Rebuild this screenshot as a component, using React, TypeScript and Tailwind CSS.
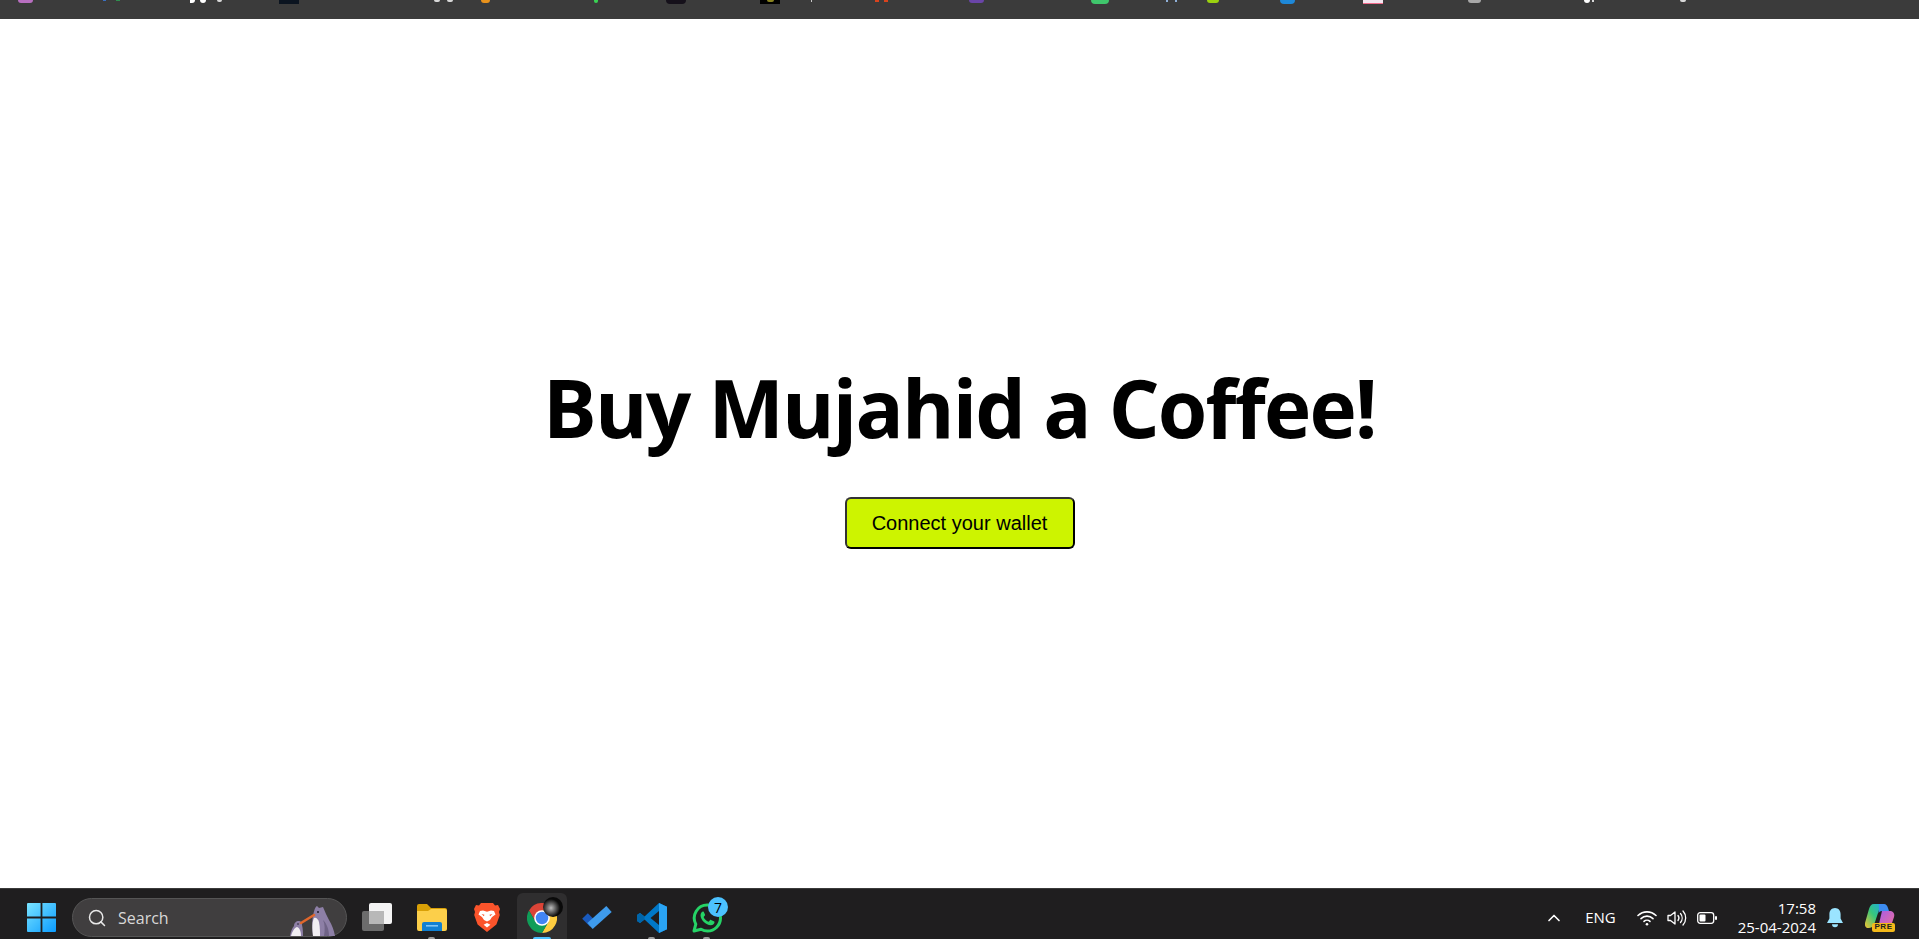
import { ChevronUp, Search } from 'lucide-react';

function TopBar() {
  // what is left of the bookmark icons, cut off by the top of the window
  return (
    <div className="flex h-[19px] shrink-0 items-start bg-[#3b3b3b]">
      <span className="ml-[18px] h-[3px] w-[15px] rounded-b-full bg-[#b86fc0]" />
      <span className="ml-[70px] h-px w-[3px] bg-[#3a6fc0]" />
      <span className="ml-[10px] h-px w-[4px] bg-[#2f8f4f]" />
      <span className="ml-[70px] h-[3px] w-[5px] rounded-br bg-white" />
      <span className="ml-[5px] h-[3px] w-[6px] rounded-b bg-white" />
      <span className="ml-[11px] h-[2px] w-[5px] rounded-b bg-[#d8d8d8]" />
      <span className="ml-[57px] h-[4px] w-[20px] bg-[#0b1420]" />
      <span className="ml-[135px] h-[2px] w-[6px] rounded-b bg-[#d8d8d8]" />
      <span className="ml-[7px] h-[2px] w-[6px] rounded-b bg-[#d8d8d8]" />
      <span className="ml-[28px] h-[3px] w-[9px] rounded-b-full bg-[#e8921c]" />
      <span className="ml-[104px] h-[3px] w-[4px] rounded-b-full bg-[#39d353]" />
      <span className="ml-[68px] h-[4px] w-[20px] rounded-b bg-[#15101a]" />
      <span className="ml-[74px] flex h-[4px] w-[20px] justify-center bg-black">
        <span className="h-[2px] w-[7px] rounded-b-full bg-[#8a8420]" />
      </span>
      <span className="ml-[31px] h-[2px] w-px bg-[#c8c8c8]" />
      <span className="ml-[63px] h-[2px] w-[4px] bg-[#d9431e]" />
      <span className="ml-[5px] h-[2px] w-[4px] bg-[#d9431e]" />
      <span className="ml-[81px] h-[3px] w-[15px] rounded-b-full bg-[#6a45a8]" />
      <span className="ml-[107px] h-[4px] w-[18px] rounded-b-full bg-[#3fc66c]" />
      <span className="ml-[57px] h-[2px] w-[2px] bg-[#8fb0d8]" />
      <span className="ml-[7px] h-[2px] w-[2px] bg-[#8fb0d8]" />
      <span className="ml-[30px] h-[3px] w-[12px] rounded-b-full bg-[#9bd10f]" />
      <span className="ml-[61px] h-[4px] w-[15px] rounded-b-full bg-[#1e88d8]" />
      <span className="ml-[68px] h-[4px] w-[20px] border-b border-[#f06a8a] bg-[#f4e6f0]" />
      <span className="ml-[85px] h-[3px] w-[13px] rounded-b-full bg-[#a8a8a8]" />
      <span className="ml-[103px] h-[3px] w-[6px] rounded-b-full bg-white" />
      <span className="ml-[2px] h-[2px] w-[2px] bg-[#d8d8d8]" />
      <span className="ml-[86px] h-[2px] w-[6px] rounded-b bg-[#d8d8d8]" />
    </div>
  );
}

function WindowsLogo() {
  return (
    <svg viewBox="0 0 29 29" className="h-[29px] w-[29px]">
      <defs>
        <linearGradient id="win" x1="0" y1="0" x2="1" y2="1">
          <stop offset="0" stopColor="#7ae4ff" />
          <stop offset="1" stopColor="#0a9bff" />
        </linearGradient>
      </defs>
      <path
        fill="url(#win)"
        d="M1 0h12.600v13.600H0V1a1 1 0 0 1 1-1zM15.400 0H28a1 1 0 0 1 1 1v12.600H15.400zM0 15.400h13.600V29H1a1 1 0 0 1-1-1zM15.400 15.400H29V28a1 1 0 0 1-1 1H15.400z"
      />
    </svg>
  );
}

function Penguins() {
  return (
    <svg viewBox="0 0 50 30" className="h-[30px] w-[50px]">
      <path fill="#8d7fa6" d="M26 30C25 20 25 14 26 10C27 5 28 1 30 0L32 2L36 1C38 6 40 10 42 14C45 19 47 24 48 30Z" />
      <path fill="#6f6386" d="M36 14C40 18 42 24 42 30H37C38 24 38 18 36 14Z" />
      <path fill="#f1eef2" d="M26 30C25 22 25 16 27 12C29 11 31 13 32 16C33 21 33 26 33 30Z" />
      <path fill="#8d7fa6" d="M3 30C4 25 5 22 7 20C7 17 9 15 12 15C14 15 15 17 15 19C16 23 16 27 16 30Z" />
      <path fill="#f1eef2" d="M4 30C5 26 7 22 10 21C13 22 14 26 14 30Z" />
      <path fill="none" stroke="#e0672c" strokeWidth="2.600" strokeLinecap="round" d="M14 17L27 9" />
      <circle cx="31" cy="6" r="1" fill="#201c28" />
      <circle cx="11" cy="18" r=".8" fill="#201c28" />
    </svg>
  );
}

function TaskView() {
  return (
    <svg viewBox="0 0 30 30" className="h-[30px] w-[30px]">
      <rect x="0" y="8" width="22" height="20" rx="2" fill="#6c6c6c" />
      <rect x="7" y="0" width="23" height="21" rx="2" fill="#f4f4f4" />
      <rect x="7" y="8" width="15" height="13" fill="#b8b8b8" />
    </svg>
  );
}

function FolderIcon() {
  return (
    <svg viewBox="0 0 30 27" className="h-[27px] w-[30px]">
      <path fill="#d9a006" d="M0 2a2 2 0 0 1 2-2h8l4 4h14a2 2 0 0 1 2 2v6H0z" />
      <path fill="#fccf4a" d="M0 7h11l3-2h14a2 2 0 0 1 2 2v18a2 2 0 0 1-2 2H2a2 2 0 0 1-2-2z" />
      <path fill="#0f80d2" d="M5 20a2 2 0 0 1 2-2h16a2 2 0 0 1 2 2v7H5z" />
      <rect x="9" y="21" width="12" height="1.600" fill="#7cc4f5" />
    </svg>
  );
}

function BraveIcon() {
  return (
    <svg viewBox="0 0 26 29" className="h-[29px] w-[26px]">
      <path
        fill="#fb542b"
        d="M7 0h12l2 2.400 3-.4 2 4-1 3 .8 3-3.400 9.600L13 29l-9.400-7.400L.2 12l.8-3-1-3 2-4 3 .4z"
      />
      <path
        fill="#fff"
        d="M13 18.500l-3-1.500-2-3-3.500-2.500L6 8l3-.5 4 1.300 4-1.300 3 .5 1.500 3.500L18 14l-2 3zM13 20l3.400 1.800L13 24.400 9.600 21.800z"
      />
      <path fill="#fb542b" d="M7.500 11l3 .8-.6 1.400zM18.500 11l-3 .8.6 1.400z" />
    </svg>
  );
}

function ChromeIcon() {
  return (
    <svg viewBox="0 0 48 48" className="h-[30px] w-[30px]">
      <path fill="#db4437" d="M44.800 12A24 24 0 0 0 3.200 12L13.600 30L24 12Z" />
      <path fill="#ffcd40" d="M44.800 12A24 24 0 0 1 24 48L34.400 30L24 12Z" />
      <path fill="#0f9d58" d="M24 48A24 24 0 0 1 3.200 12L13.600 30L34.400 30Z" />
      <circle cx="24" cy="24" r="12.500" fill="#fff" />
      <circle cx="24" cy="24" r="10" fill="#4285f4" />
    </svg>
  );
}

function TasksIcon() {
  return (
    <svg viewBox="0 0 30 24" className="h-[24px] w-[30px]" fill="none" strokeWidth="8">
      <path stroke="#195abd" d="M3 10L11 18" />
      <path stroke="#3e9bec" d="M8 20L27 3" />
    </svg>
  );
}

function VSCodeIcon() {
  return (
    <svg viewBox="0 0 30 30" className="h-[30px] w-[30px]">
      <path fill="#0078c8" d="M22 0l8 3.800v22.400L22 30 7.500 16.500 3 20 0 18v-6l3-2 4.500 3.500zm0 8l-8.500 7 8.500 7z" />
      <path fill="#0065a9" d="M3 10l4.500 3.500L7.500 16.500 3 20 0 18v-6z" />
      <path fill="#2aa4f4" d="M22 0l8 3.800v22.400L22 30z" />
    </svg>
  );
}

function WhatsAppIcon() {
  return (
    <svg viewBox="0 0 30 30" className="h-[30px] w-[30px]">
      <path
        fill="none"
        stroke="#25d366"
        strokeWidth="3"
        strokeLinejoin="round"
        d="M15.500 2a13 13 0 0 1 0 26c-2.300 0-4.500-.6-6.400-1.700L2 28l1.800-6.900A13 13 0 0 1 15.500 2z"
      />
      <path
        fill="#25d366"
        d="M11 8.500c-.8 0-2.500 1.500-2.500 3.700 0 4.500 5.500 10 10.300 10 2.200 0 3.700-1.700 3.700-3 0-.6-.2-.8-.7-1l-2.800-1.300c-.5-.2-.8-.1-1.100.3l-1 1.300c-.3.300-.6.300-1 .1-1.800-.8-3.300-2.300-4.100-4-.2-.4-.1-.7.200-1l.9-1.100c.2-.3.2-.6.100-.9L11.800 9c-.2-.4-.4-.5-.8-.5z"
      />
    </svg>
  );
}

function WifiIcon() {
  return (
    <svg viewBox="0 0 20 16" className="h-[16px] w-[20px]" fill="none" stroke="#fff" strokeWidth="1.600" strokeLinecap="round">
      <path d="M1 5.500a13 13 0 0 1 18 0" />
      <path d="M4 8.600a8.600 8.600 0 0 1 12 0" />
      <path d="M7 11.400a4.400 4.400 0 0 1 6 0" />
      <circle cx="10" cy="14.200" r="1.300" fill="#fff" stroke="none" />
    </svg>
  );
}

function VolumeIcon() {
  return (
    <svg viewBox="0 0 20 18" className="h-[18px] w-[20px]" fill="none" stroke="#fff" strokeWidth="1.300" strokeLinecap="round" strokeLinejoin="round">
      <path d="M1 6.500h2.500L8 3v12l-4.500-3.500H1z" />
      <path d="M11 6.500a4 4 0 0 1 0 5" />
      <path d="M13.500 4.500a7 7 0 0 1 0 9" />
      <path d="M16 2a10.500 10.500 0 0 1 0 14" />
    </svg>
  );
}

function BatteryIcon() {
  return (
    <svg viewBox="0 0 20 14" className="h-[14px] w-[20px]">
      <rect x=".7" y="1.700" width="16" height="10.600" rx="2.500" fill="none" stroke="#fff" strokeWidth="1.300" />
      <rect x="2.500" y="3.500" width="6" height="7" rx="1" fill="#fff" />
      <rect x="18" y="5" width="2" height="4" rx="1" fill="#fff" />
    </svg>
  );
}

function BellIcon() {
  return (
    <svg viewBox="0 0 16 20" className="h-[20px] w-[16px]">
      <path fill="#9be4ff" d="M8 0c3.600 0 5.600 2.800 5.600 6.200v4.300L16 15H0l2.400-4.500V6.200C2.400 2.800 4.400 0 8 0z" />
      <path fill="#9be4ff" d="M5 16.300h6a3 3 0 0 1-6 0z" />
    </svg>
  );
}

function CopilotIcon() {
  return (
    <div className="relative h-[28px] w-[30px]">
      <svg viewBox="0 0 30 24" className="h-[24px] w-[30px]">
        <defs>
          <linearGradient id="copA" x1="1" y1="0" x2="0" y2="1">
            <stop offset="0" stopColor="#1aa8e8" />
            <stop offset=".5" stopColor="#37c77c" />
            <stop offset="1" stopColor="#f2c230" />
          </linearGradient>
          <linearGradient id="copB" x1="0" y1="0" x2="1" y2="1">
            <stop offset="0" stopColor="#a55ce8" />
            <stop offset="1" stopColor="#f0709a" />
          </linearGradient>
        </defs>
        <path fill="url(#copB)" d="M17 7h8c3 0 5 2.500 4 6l-2 6c-1 3-3 5-6 5h-8z" />
        <path fill="url(#copA)" d="M9 0h10c-3 .5-4 3-5 6l-4 12c-1 3-3 6-6 6H3c-2 0-3.500-2-3-5L4 5c1-3 2-5 5-5z" />
        <path fill="#3d8cf0" d="M14 0h5c2 0 3.500 2 4 4l1 3h-7c-2 0-3 1-3.500 2.500L14 5c0-2 0-4 0-5z" />
      </svg>
      <span className="absolute bottom-0 left-[7px] flex h-[9px] w-[23px] items-center justify-center rounded-[2px] bg-[#f4b919] font-['Liberation_Sans',sans-serif] text-[8px] font-bold tracking-[0.5px] text-[#222]">
        PRE
      </span>
    </div>
  );
}

function Taskbar() {
  return (
    <div className="flex h-[51px] shrink-0 items-end border-t border-[#3a3a3a] bg-[#1f1e1f] pl-[16px] font-['Open_Sans',sans-serif] text-white">
      <div className="flex items-end gap-[5px]">
        <div className="flex h-[46px] w-[50px] items-center justify-center pt-[3px]">
          <WindowsLogo />
        </div>
        <div className="relative mb-[2px] ml-px flex h-[39px] w-[275px] items-center rounded-full border border-[#555] bg-[#403e3f] pl-[14px] text-[#d8d8d8]">
          <Search size={20} strokeWidth={1.800} className="text-[#e8e8e8]" />
          <span className="ml-[11px] text-[16px]">Search</span>
          <div className="absolute bottom-0 right-[9px]">
            <Penguins />
          </div>
        </div>
        <div className="flex h-[46px] w-[50px] items-center justify-center pt-[3px]">
          <TaskView />
        </div>
        <div className="relative flex h-[46px] w-[50px] items-center justify-center pt-[3px]">
          <FolderIcon />
          <span className="absolute bottom-0 left-[21px] h-[2px] w-[7px] rounded-t-full bg-[#9a9a9a]" />
        </div>
        <div className="flex h-[46px] w-[50px] items-center justify-center pt-[3px]">
          <BraveIcon />
        </div>
        <div className="relative flex h-[46px] w-[50px] items-center justify-center rounded-t-md bg-[#2f2e2f] pt-[3px]">
          <ChromeIcon />
          <span className="absolute left-[26px] top-[4px] h-[20px] w-[20px] rounded-full bg-[radial-gradient(circle_at_40%_55%,#bdbdbd_0%,#6a6a6a_25%,#0a0a0a_55%)]" />
          <span className="absolute bottom-0 left-[16px] h-[2px] w-[18px] rounded-t-sm bg-[#4cc2ff]" />
        </div>
        <div className="flex h-[46px] w-[50px] items-center justify-center pt-[3px]">
          <TasksIcon />
        </div>
        <div className="relative flex h-[46px] w-[50px] items-center justify-center pt-[3px]">
          <VSCodeIcon />
          <span className="absolute bottom-0 left-[21px] h-[2px] w-[7px] rounded-t-full bg-[#9a9a9a]" />
        </div>
        <div className="relative flex h-[46px] w-[50px] items-center justify-center pt-[3px]">
          <WhatsAppIcon />
          <span className="absolute bottom-0 left-[21px] h-[2px] w-[7px] rounded-t-full bg-[#9a9a9a]" />
          <span className="absolute left-[26px] top-[4px] flex h-[20px] w-[20px] items-center justify-center rounded-full bg-[#4cc2ff] text-[14px] text-black">
            7
          </span>
        </div>
      </div>
      <div className="ml-auto flex h-[46px] items-center pr-[24px] pt-[3px]">
        <ChevronUp size={20} strokeWidth={2} />
        <span className="ml-[21px] text-[15px]">ENG</span>
        <div className="ml-[21px]">
          <WifiIcon />
        </div>
        <div className="ml-[10px]">
          <VolumeIcon />
        </div>
        <div className="ml-[10px]">
          <BatteryIcon />
        </div>
        <div className="ml-[21px] flex flex-col items-end text-[15px] leading-[19px]">
          <span>17:58</span>
          <span>25-04-2024</span>
        </div>
        <div className="ml-[11px]">
          <BellIcon />
        </div>
        <div className="ml-[22px]">
          <CopilotIcon />
        </div>
      </div>
    </div>
  );
}

export default function App() {
  return (
    <div className="flex h-[939px] flex-col overflow-hidden bg-white">
      <TopBar />
      <main className="flex flex-1 flex-col items-center justify-center pb-[5px]">
        <h1 className="font-['Open_Sans',sans-serif] text-[80px] font-bold leading-[108px] tracking-[-1.800px] text-black">
          Buy Mujahid a Coffee!
        </h1>
        <button className="mt-[36px] h-[52px] w-[230px] rounded-md border-2 border-[#333] border-b-black border-r-black bg-[#cdf400] font-['Liberation_Sans',sans-serif] text-[20px] text-black">
          Connect your wallet
        </button>
      </main>
      <Taskbar />
    </div>
  );
}
